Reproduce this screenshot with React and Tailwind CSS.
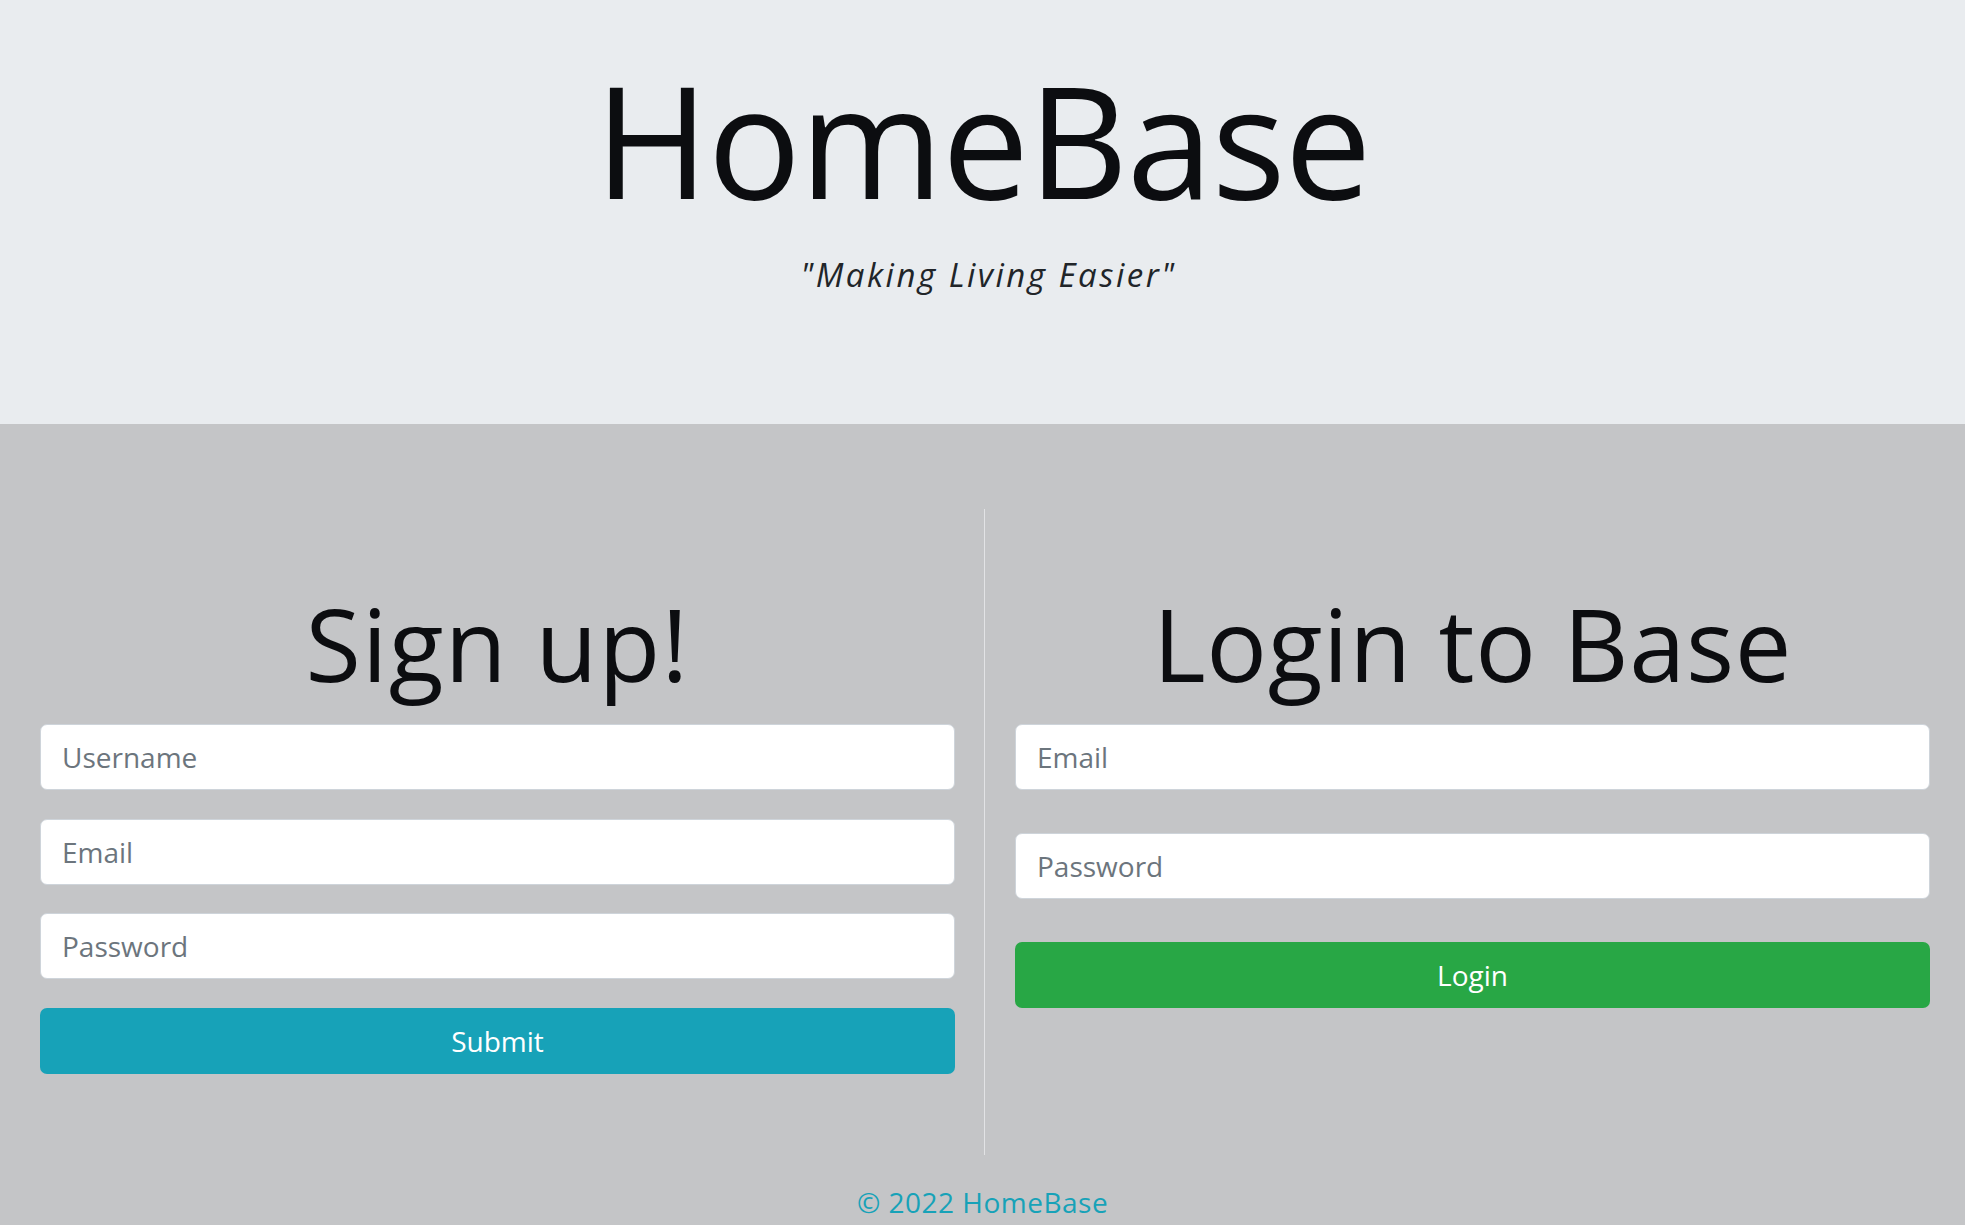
import React from 'react';

function Field({ type = 'text', placeholder }) {
  return (
    <input
      type={type}
      placeholder={placeholder}
      className="block w-full h-[66px] px-[21px] bg-white border border-[#ced4da] rounded-[7px] text-[28px] text-[#495057] placeholder:text-[#6c757d] outline-none"
    />
  );
}

export default function App() {
  return (
    <div className="min-h-screen bg-[#c4c5c7] font-['Open_Sans','Noto_Sans',sans-serif]">
      {/* Jumbotron */}
      <header className="h-[424px] bg-[#e9ecef] flex flex-col items-center pt-[61px]">
        <h1 className="text-[155px] leading-none tracking-[-1.2px] text-[#0c0d10]">HomeBase</h1>
        <p className="mt-[42px] pl-[12px] text-[33px] leading-none tracking-[2.5px] italic text-[#212529]">{'"Making Living Easier"'}</p>
      </header>

      {/* Forms */}
      <main className="flex pl-[40px] pr-[35px] pt-[85px]">
        <section className="flex-1 h-[646px] pr-[29px] border-r border-[#e2e3e5] pt-[84px]">
          <h2 className="text-center text-[101px] leading-none tracking-[1.2px] text-[#0c0d10]">Sign up!</h2>
          <form className="mt-[30px] flex flex-col gap-[28.5px]" onSubmit={(e) => e.preventDefault()}>
            <Field placeholder="Username" />
            <Field type="email" placeholder="Email" />
            <Field type="password" placeholder="Password" />
            <button className="h-[66px] w-full rounded-[7px] bg-[#17a2b8] text-white text-[28px]">Submit</button>
          </form>
        </section>

        <section className="flex-1 h-[646px] pl-[30px] pt-[84px]">
          <h2 className="text-center text-[101px] leading-none tracking-[0.6px] text-[#0c0d10]">Login to Base</h2>
          <form className="mt-[30px] flex flex-col gap-[43px]" onSubmit={(e) => e.preventDefault()}>
            <Field type="email" placeholder="Email" />
            <Field type="password" placeholder="Password" />
            <button className="h-[66px] w-full rounded-[7px] bg-[#28a745] text-white text-[28px]">Login</button>
          </form>
        </section>
      </main>

      <footer className="mt-[33px] text-center text-[28px] leading-none tracking-[0.5px] text-[#17a2b8]">© 2022 HomeBase</footer>
    </div>
  );
}
